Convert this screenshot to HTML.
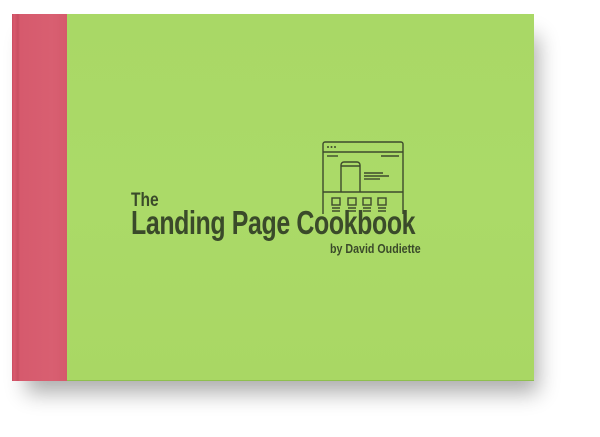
<!DOCTYPE html>
<html><head><style>
html,body{margin:0;padding:0;background:#fff;width:600px;height:437px;overflow:hidden;position:relative}
.shadow{position:absolute;left:20px;top:24px;width:512px;height:357px;box-shadow:6px 12px 20px rgba(0,0,0,0.32);background:#999}
.spine{position:absolute;left:12px;top:14px;width:55px;height:367px;background:linear-gradient(90deg,#c84c60 0px,#d9596d 2px,#c94f62 6px,#d65a6d 8px,#d85f71 40px,#d55a6c 55px);}
.cover{position:absolute;left:67px;top:14px;width:467px;height:367px;background:linear-gradient(180deg,#a9d866,#abda68 50%,#a9d764);border-bottom:1px solid #8fbf50;box-sizing:border-box}
.t{position:absolute;font-family:"Liberation Sans",sans-serif;font-weight:bold;color:#3a4a2a;white-space:nowrap;transform-origin:0 0}
</style></head><body>
<div class="shadow"></div>
<div class="spine"></div>
<div class="cover"></div>
<svg style="position:absolute;left:0;top:0" width="600" height="437" fill="none" stroke="#3d4a2c" stroke-width="1.4">
<path d="M323 214 V144 a2 2 0 0 1 2 -2 H401 a2 2 0 0 1 2 2 V214"/>
<line x1="323" y1="152" x2="403" y2="152"/>
<line x1="323" y1="192" x2="403" y2="192"/>
<g fill="#3d4a2c" stroke="none"><circle cx="328" cy="147" r="1"/><circle cx="331.5" cy="147" r="1"/><circle cx="335" cy="147" r="1"/></g>
<line x1="327" y1="156" x2="338" y2="156"/>
<line x1="381" y1="156" x2="399" y2="156"/>
<path d="M341 192 V165 a3 3 0 0 1 3 -3 H357 a3 3 0 0 1 3 3 V192"/>
<line x1="341" y1="166" x2="360" y2="166"/>
<line x1="364" y1="173" x2="383" y2="173"/>
<line x1="364" y1="176" x2="389" y2="176"/>
<line x1="364" y1="179" x2="380" y2="179"/>
<rect x="332" y="198" width="8" height="7"/><rect x="348" y="198" width="8" height="7"/><rect x="363" y="198" width="8" height="7"/><rect x="378" y="198" width="8" height="7"/>
<path d="M332 208h8M332 211h8M348 208h8M348 211h8M363 208h8M363 211h8M378 208h8M378 211h8"/>
</svg>
<div class="t" style="left:131px;top:190px;font-size:19px;transform:scaleX(0.82)">The</div>
<div class="t" style="left:131px;top:204px;font-size:33px;letter-spacing:-0.5px;transform:scaleX(0.755)">Landing Page Cookbook</div>
<div class="t" style="left:330px;top:241px;font-size:13px;transform:scaleX(0.82)">by David Oudiette</div>
</body></html>
